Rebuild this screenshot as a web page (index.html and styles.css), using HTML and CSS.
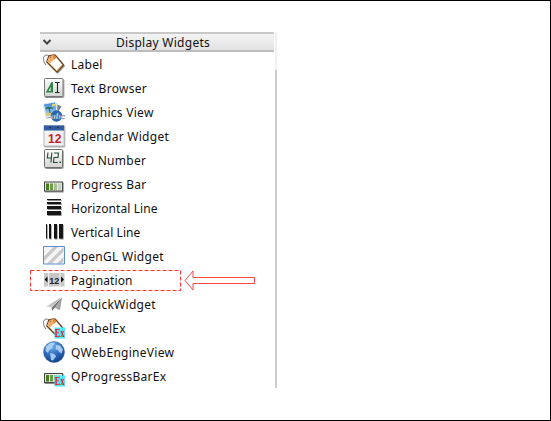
FILE: index.html
```html
<!DOCTYPE html>
<html lang="en">
<head>
<meta charset="utf-8">
<title>Display Widgets</title>
<link rel="stylesheet" href="styles.css">
</head>
<body>
<svg class="defs" width="0" height="0">
  <defs>
    <linearGradient id="tile" x2="0" y2="1"><stop stop-color="#fcfcfc"/><stop offset="1" stop-color="#d2d4d2"/></linearGradient>
    <linearGradient id="sky" x2="0" y2="1"><stop stop-color="#3d83dc"/><stop offset="1" stop-color="#b4dcf8"/></linearGradient>
    <linearGradient id="plane" x2="1"><stop stop-color="#d8d8d8"/><stop offset="1" stop-color="#999"/></linearGradient>
    <radialGradient id="globe" cx=".4" cy=".2" r=".85"><stop stop-color="#78b2f0"/><stop offset=".5" stop-color="#316fc0"/><stop offset="1" stop-color="#123d83"/></radialGradient>
    <filter id="shadow" x="-20%" y="-20%" width="150%" height="150%"><feDropShadow dx=".6" dy=".9" stdDeviation=".7" flood-opacity=".5"/></filter>
    <g id="tag">
      <g filter="url(#shadow)">
        <path d="M7 3.500 13 2.800 21.500 13 15 20 4.800 9.800Z" fill="#fff" stroke="#6b4018" stroke-width="1.200" stroke-linejoin="round"/>
        <path d="M7.300 3.900 12.800 3.300 14.500 5.500 7.500 11.800 5.300 9.600Z" fill="#f3ad68"/>
        <path d="M10.500 3.600 12.800 3.300 14.500 5.500 12.300 7.500Z" fill="#dc8430"/>
        <path d="M14.800 18.600 6.500 10.500M20 13l-5.200 5.600" stroke="#eba55c" stroke-width=".8" fill="none"/>
      </g>
      <path d="M9 6C6 1.500 1.500 2.500 1.500 6.500c0 3 1 4.800 2.500 6.500" fill="none" stroke="#666" stroke-width=".9"/>
    </g>
    <g id="bar">
      <g filter="url(#shadow)"><rect x="2.500" y="9.500" width="18" height="9" fill="#e6e8e4" stroke="#454845"/></g>
      <path d="M4 11h3v6.500H4z" fill="#477c20"/><path d="M8 11h3v6.500H8z" fill="#6c9c48"/><path d="M12 11h3v6.500h-3z" fill="#a9bd98"/><path d="M16 11h3v6.500h-3z" fill="#c9cec6"/>
    </g>
    <g id="ex">
      <rect x="12.500" y="11.500" width="10.500" height="11" fill="#48eaf8"/>
      <text x="12.800" y="21" textLength="9.800" lengthAdjust="spacingAndGlyphs" class="ex-text">Ex</text>
    </g>
  </defs>
</svg>
<main class="page">
  <section class="panel">
    <header class="header">
      <svg class="chevron" viewBox="0 0 10 8"><path d="m1.500 2 3.500 3.500L8.500 2"/></svg>
      <span class="title">Display Widgets</span>
    </header>
    <ul class="list">
      <li class="row"><svg class="icon" viewBox="0 0 24 24"><use href="#tag"/></svg><span class="name">Label</span></li>
      <li class="row"><svg class="icon" viewBox="0 0 24 24"><g filter="url(#shadow)"><rect x="2.500" y="2.500" width="18.500" height="18" rx="1" fill="url(#tile)" stroke="#777"/></g><path d="M3.800 16.500 9.500 6h1.500v10.500ZM6.500 15h2.300v-4.200Z" fill="#2d8346" fill-rule="evenodd"/><path d="M13 6.500h4.500M15.500 6v10M13 16.500h4.500" fill="none" stroke="#222" stroke-width="1.100"/></svg><span class="name">Text Browser</span></li>
      <li class="row"><svg class="icon" viewBox="0 0 24 24"><g filter="url(#shadow)"><path d="m1.500 4 12-2 2 13-11.500 2Z" fill="url(#sky)" stroke="#e4edf4"/></g><path d="m3.500 13 10.800-2 .6 3-10.800 2Z" fill="#d8c67c"/><path d="M8 13c0-4-1-5-2-6m1.500 1.200C6 7 5 7.500 4 9m3.500-.8c1.500-1.300 2.500-.3 3 .8" fill="none" stroke="#286846" stroke-width="1.200"/><circle cx="11.500" cy="5" r="1.500" fill="#f4de54"/><path d="m15.500 4.500 4 2-4 6Z" fill="#74808b"/><circle cx="14.500" cy="16" r="5.700" fill="#2665b5"/><text x="9" y="18.500" class="abc" textLength="14" lengthAdjust="spacingAndGlyphs">abc</text></svg><span class="name">Graphics View</span></li>
      <li class="row"><svg class="icon" viewBox="0 0 24 24"><g filter="url(#shadow)"><rect x="2" y="1.500" width="20" height="20.500" fill="#f2f2f4" stroke="#aaa" stroke-width=".7"/></g><path d="M2 1.500h20v5H2z" fill="#315c9e"/><path d="M7.500 3.500h1.500M15 3.500h1.500" stroke="#142c54" stroke-width="1.500"/><text x="6" y="18.800" class="date" textLength="13.500">12</text></svg><span class="name">Calendar Widget</span></li>
      <li class="row"><svg class="icon" viewBox="0 0 24 24"><g filter="url(#shadow)"><rect x="2.500" y="1.500" width="18" height="18" rx="1" fill="url(#tile)" stroke="#6d706d"/></g><path d="M6 4.500 5.300 10h4.200M9.800 4.500 9 14.500M12 5h4.500l-.5 4.500h-4l-.5 5h4.300" fill="none" stroke="#244d37" stroke-width="1.100"/><path d="M17.500 13.500h1.500v1.500h-1.500z" fill="#244d37"/></svg><span class="name">LCD Number</span></li>
      <li class="row"><svg class="icon" viewBox="0 0 24 24"><use href="#bar" y=".5"/></svg><span class="name">Progress Bar</span></li>
      <li class="row tight"><svg class="icon" viewBox="0 0 24 24"><g filter="url(#shadow)" fill="#181818"><path d="M5 3h14v1H5zM5 6h14v2H5zM5 10h14v3H5zM5 15h14v4H5z"/></g></svg><span class="name">Horizontal Line</span></li>
      <li class="row tight"><svg class="icon" viewBox="0 0 24 24"><g filter="url(#shadow)" fill="#181818"><path d="M4 4h1v14.500H4zM7 4h2v14.500H7zM12 4h3v14.500h-3zM17 4h4v14.500h-4z"/></g></svg><span class="name">Vertical Line</span></li>
      <li class="row"><svg class="icon" viewBox="0 0 24 24"><path d="M1.500 2.500h21v17.500h-21z" fill="#f5f5f5"/><path d="M2 12.500 11.500 3H16L2 17ZM5 19.500 21.500 3v4.500l-12 12ZM15 19.500l6.500-6.500v4.500l-2 2Z" fill="#c9c9c9"/><path d="M1.500 2.500h21v17.500h-21z" fill="none" stroke="#5b8fce"/></svg><span class="name">OpenGL Widget</span></li>
      <li class="row marked tight">
        <svg class="icon" viewBox="0 0 24 24"><path d="M2 5h20.500v13.500H2z" fill="#c7c7c7"/><path d="M6.500 5v13.500M18 5v13.500" stroke="#eee"/><path d="M5.500 8.500v6l-3-3ZM19 8.500v6l3-3Z" fill="#111"/><text x="7.200" y="15.500" class="pages" textLength="10">12</text></svg><span class="name">Pagination</span>
        <svg class="outline" viewBox="0 0 152 23"><rect x=".5" y="1.500" width="150" height="20"/></svg>
        <svg class="arrow" viewBox="0 0 72 22"><path d="M1 10.500 9 1v6.500h61.500v6H9V20Z"/></svg>
      </li>
      <li class="row"><svg class="icon" viewBox="0 0 24 24"><path d="M4 14.500 20 5l-2 13-5.500-2Z" fill="url(#plane)"/><path d="m9.500 15.500 10.500-10.500-7.500 11-2.500 3Z" fill="#777"/><path d="M9 15.500 20 5" stroke="#f2f2f2" stroke-width=".8"/></svg><span class="name">QQuickWidget</span></li>
      <li class="row"><svg class="icon" viewBox="0 0 24 24"><use href="#tag"/><use href="#ex"/></svg><span class="name">QLabelEx</span></li>
      <li class="row"><svg class="icon" viewBox="0 0 24 24"><circle cx="12" cy="12" r="10.500" fill="url(#globe)" stroke="#2d5c9b" stroke-width=".5"/><path d="M4 6.500 8 3l5-.5-1 2.500-2 1 .5 2L7 10.500 6 13l-2.500-2ZM14 5l4 .5 3 4-1.500 4-2.500-1.500-1-2-2.500-.5ZM8 13l4.500 1 1.500 2.500-3 4-2-.5-.5-4Z" fill="#b9d8f6" opacity=".85"/></svg><span class="name">QWebEngineView</span></li>
      <li class="row"><svg class="icon" viewBox="0 0 24 24"><use href="#bar"/><use href="#ex"/></svg><span class="name">QProgressBarEx</span></li>
    </ul>
  </section>
  <div class="scroll"><div class="thumb"></div></div>
</main>
</body>
</html>
```
FILE: styles.css
```css
* { box-sizing: border-box; }
body { margin: 0; }
.defs { position: absolute; }
.page {
  display: flex;
  gap: 1px;
  width: 551px;
  height: 421px;
  padding: 31px 0 0 39px;
  border: 1px solid #000;
  background: #fff;
  color: #111;
  font: 12px/24px "Noto Sans", sans-serif;
  letter-spacing: .28px;
  overflow: hidden;
}
.panel { width: 234px; }
.header {
  display: flex;
  align-items: center;
  height: 20px;
  border-top: 2px solid #c8c8c8;
  border-bottom: 2px solid #bdbdbd;
  background: linear-gradient(#f3f3f3, #e2e2e2);
}
.chevron { width: 10px; height: 8px; margin-left: 2px; }
.chevron path { fill: none; stroke: #444; stroke-width: 2; }
.title { margin-left: 64px; padding-top: 2px; line-height: 16px; }
.list { margin: 0; padding: 0; list-style: none; }
.row { display: flex; height: 24px; padding-left: 2px; gap: 5px; white-space: nowrap; }
.name { padding-top: 1px; }
.tight { letter-spacing: .08px; }
.icon { flex: none; width: 24px; height: 24px; overflow: visible; }
.marked { position: relative; }
.outline { position: absolute; left: -10px; top: 1px; width: 152px; height: 23px; }
.outline rect { fill: none; stroke: #f33; stroke-dasharray: 4 2; }
.arrow { position: absolute; left: 144px; top: 2px; width: 72px; height: 22px; }
.arrow path { fill: #fff; stroke: #f44; }
.scroll { width: 2px; height: 356px; padding-top: 38px; background: #f0f0f0; }
.thumb { height: 318px; background: #cbcbcb; }
.date { font: bold 12px "Liberation Sans", sans-serif; fill: #c81e2c; letter-spacing: 0; }
.pages { font: bold 9px "Liberation Sans", sans-serif; fill: #222; letter-spacing: 0; }
.abc { font: italic bold 9px "Liberation Serif", serif; fill: #e4eef9; stroke: #5c7596; stroke-width: .3px; letter-spacing: 0; }
.ex-text { font: bold 12px "Liberation Serif", serif; fill: #e81828; letter-spacing: 0; }
```
